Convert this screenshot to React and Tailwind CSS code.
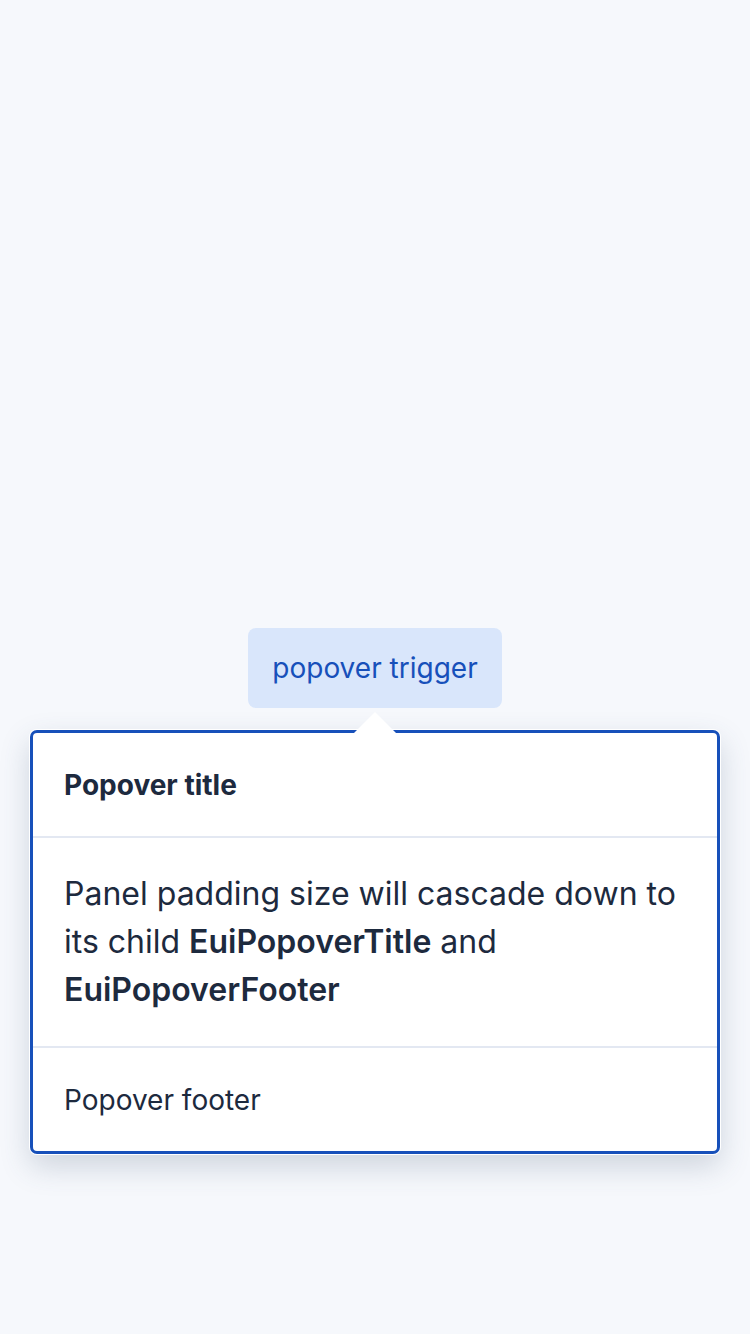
export default function App() {
  return (
    <div
      className="h-[1334px] w-[750px] bg-[#f6f8fc] flex items-center justify-center pt-[2px]"
      style={{ fontFamily: "Inter, 'Noto Sans', sans-serif" }}
    >
      <div className="relative">
        <button className="h-[80px] w-[254px] rounded-[8px] bg-[#d9e6fb] text-[#1750ba] text-[28px] flex items-center justify-center">
          popover trigger
        </button>

        <div className="absolute left-1/2 top-[102px] -translate-x-1/2 w-[690px]">
          <div className="absolute left-1/2 -top-[18px] -translate-x-1/2 w-0 h-0 border-l-[22px] border-r-[22px] border-b-[22px] border-l-transparent border-r-transparent border-b-white z-10" />
          <div className="rounded-[7px] bg-white ring-1 ring-white border-[3px] border-[#1750ba] shadow-[0_12px_30px_rgba(60,80,110,0.22)] text-[#1d2a3e]">
            <div className="px-[31px] h-[105px] flex items-center border-b-2 border-[#e3e8f2]">
              <span className="text-[28px] font-bold">Popover title</span>
            </div>
            <div className="px-[31px] py-[32px] text-[32px] leading-[48px]">
              Panel padding size will cascade down to its child{" "}
              <strong className="font-semibold">EuiPopoverTitle</strong> and{" "}
              <strong className="font-semibold">EuiPopoverFooter</strong>
            </div>
            <div className="px-[31px] h-[105px] flex items-center border-t-2 border-[#e3e8f2]">
              <span className="text-[28px]">Popover footer</span>
            </div>
          </div>
        </div>
      </div>
    </div>
  );
}
